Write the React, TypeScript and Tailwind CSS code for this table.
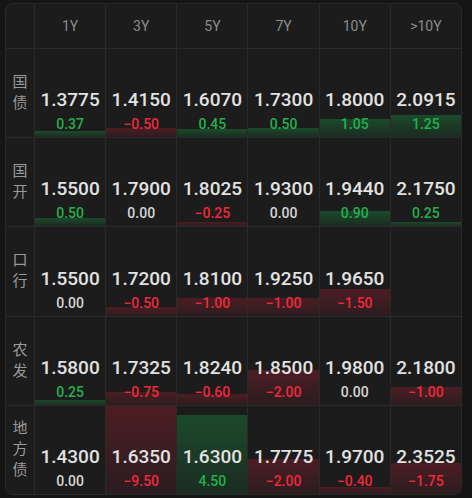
const tenors = ['1Y', '3Y', '5Y', '7Y', '10Y', '>10Y'];

type Cell = { rate: string; chg: number } | null;

const rows: { name: string; cells: Cell[] }[] = [
  {
    name: '国债',
    cells: [
      { rate: '1.3775', chg: 0.37 },
      { rate: '1.4150', chg: -0.5 },
      { rate: '1.6070', chg: 0.45 },
      { rate: '1.7300', chg: 0.5 },
      { rate: '1.8000', chg: 1.05 },
      { rate: '2.0915', chg: 1.25 },
    ],
  },
  {
    name: '国开',
    cells: [
      { rate: '1.5500', chg: 0.5 },
      { rate: '1.7900', chg: 0 },
      { rate: '1.8025', chg: -0.25 },
      { rate: '1.9300', chg: 0 },
      { rate: '1.9440', chg: 0.9 },
      { rate: '2.1750', chg: 0.25 },
    ],
  },
  {
    name: '口行',
    cells: [
      { rate: '1.5500', chg: 0 },
      { rate: '1.7200', chg: -0.5 },
      { rate: '1.8100', chg: -1 },
      { rate: '1.9250', chg: -1 },
      { rate: '1.9650', chg: -1.5 },
      null,
    ],
  },
  {
    name: '农发',
    cells: [
      { rate: '1.5800', chg: 0.25 },
      { rate: '1.7325', chg: -0.75 },
      { rate: '1.8240', chg: -0.6 },
      { rate: '1.8500', chg: -2 },
      { rate: '1.9800', chg: 0 },
      { rate: '2.1800', chg: -1 },
    ],
  },
  {
    name: '地方债',
    cells: [
      { rate: '1.4300', chg: 0 },
      { rate: '1.6350', chg: -9.5 },
      { rate: '1.6300', chg: 4.5 },
      { rate: '1.7775', chg: -2 },
      { rate: '1.9700', chg: -0.4 },
      { rate: '2.3525', chg: -1.75 },
    ],
  },
];

const fmt = (v: number) => (v < 0 ? '\u2212' + Math.abs(v).toFixed(2) : v.toFixed(2));

const RateCell = ({ cell }: { cell: Cell }) => {
  if (!cell) return <div className="relative border-l border-t border-[#2a2a2a]" />;
  const up = cell.chg > 0;
  const down = cell.chg < 0;
  // bar height: 20% of the cell per 1.00 of change, capped at full cell
  const pct = Math.min(Math.abs(cell.chg) * 20, 100);
  return (
    <div className="relative border-l border-t border-[#2a2a2a]">
      {cell.chg !== 0 && (
        <div
          className={
            'absolute bottom-0 left-0 right-0 bg-gradient-to-b ' +
            (up ? 'from-[#1b4a2b] to-[#1b2c21]' : 'from-[#4c1d23] to-[#2b1c1f]')
          }
          style={{ height: pct + '%' }}
        />
      )}
      <div className="relative flex h-full flex-col items-center justify-end pb-[4px]">
        <div className="text-[19px] font-medium leading-[24px] text-[#e2e2e2]">{cell.rate}</div>
        <div
          className={
            'mt-[3px] text-[14px] font-medium leading-[18px] ' +
            (up ? 'text-[#22b14c]' : down ? 'text-[#f0283c]' : 'text-[#d6d6d6]')
          }
        >
          {fmt(cell.chg)}
        </div>
      </div>
    </div>
  );
};

export default function App() {
  return (
    <div
      className="h-[498px] w-[472px] bg-[#151515] pl-[5px] pt-[3px]"
      style={{ fontFamily: 'Roboto, "Noto Sans CJK SC", sans-serif' }}
    >
      <div className="grid h-[492px] w-[457px] grid-cols-[28px_repeat(6,1fr)] grid-rows-[44px_repeat(5,1fr)] overflow-hidden rounded-lg border border-[#2a2a2a] bg-[#1c1c1c]">
        <div />
        {tenors.map((t) => (
          <div key={t} className="flex items-center justify-center border-l border-[#2a2a2a] text-[14px] text-[#8c8c8c]">
            {t}
          </div>
        ))}
        {rows.map((r) => (
          <>
            <div
              key={r.name}
              className="flex flex-col items-center justify-center border-t border-[#2a2a2a] text-[15px] leading-[21px] text-[#9a9a9a]"
            >
              {r.name.split('').map((c, i) => (
                <span key={i}>{c}</span>
              ))}
            </div>
            {r.cells.map((c, i) => (
              <RateCell key={r.name + i} cell={c} />
            ))}
          </>
        ))}
      </div>
    </div>
  );
}
